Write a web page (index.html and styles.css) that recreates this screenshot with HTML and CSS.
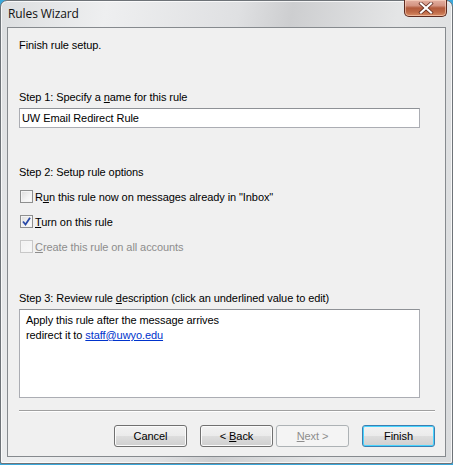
FILE: index.html
```html
<!DOCTYPE html>
<html>
<head>
<meta charset="utf-8">
<link rel="stylesheet" href="styles.css">
</head>
<body>
<div class="window">
  <div class="titlebar">
    <span class="title">Rules Wizard</span>
    <span class="close"><svg width="16" height="12" viewBox="0 0 16 12"><path d="M3 1.5 L13 10.5 M13 1.5 L3 10.5" stroke="#5a2418" stroke-width="3.6" stroke-linecap="square"/><path d="M3 1.5 L13 10.5 M13 1.5 L3 10.5" stroke="#ffffff" stroke-width="2.2" stroke-linecap="square"/></svg></span>
  </div>
  <div class="client">
    <div class="text heading">Finish rule setup.</div>
    <div class="text step1">Step 1: Specify a <u>n</u>ame for this rule</div>
    <div class="field">UW Email Redirect Rule</div>
    <div class="text step2">Step 2: Setup rule options</div>
    <div class="options">
      <div class="opt"><span class="cb"></span><span>R<u>u</u>n this rule now on messages already in "Inbox"</span></div>
      <div class="opt"><span class="cb checked"><svg width="9" height="9" viewBox="0 0 9 9"><path d="M1 4.5 L3.5 7.5 L8 0.8" fill="none" stroke="#2a4aa8" stroke-width="1.8"/></svg></span><span><u>T</u>urn on this rule</span></div>
      <div class="opt disabled"><span class="cb"></span><span><u>C</u>reate this rule on all accounts</span></div>
    </div>
    <div class="text step3">Step 3: Review rule <u>d</u>escription (click an underlined value to edit)</div>
    <div class="desc">
      <div>Apply this rule after the message arrives</div>
      <div>redirect it to <a class="link">staff@uwyo.edu</a></div>
    </div>
    <div class="sep"></div>
    <div class="buttons">
      <span class="btn"><span>Cancel</span></span>
      <span class="btn back"><span>&lt; <u>B</u>ack</span></span>
      <span class="btn next dis"><span><u>N</u>ext &gt;</span></span>
      <span class="btn finish"><span>Finish</span></span>
    </div>
  </div>
</div>
</body>
</html>
```
FILE: styles.css
```css
html, body {
  margin: 0;
  padding: 0;
}
body {
  background: #3aa8dc;
  width: 453px;
  height: 465px;
  overflow: hidden;
  font-family: "Liberation Sans", Arial, sans-serif;
  font-size: 11px;
  letter-spacing: -0.08px;
  color: #000;
}
.window {
  box-sizing: border-box;
  width: 453px;
  height: 464px;
  border: 1px solid #6e7378;
  border-radius: 7px 7px 2px 2px;
  background: linear-gradient(100deg, #dcdee0 0%, #eeeff0 20%, #dfe0e2 45%, #cdced0 55%, #e4e5e6 75%, #d9dbdd 100%);
  padding: 0 6px 6px 6px;
  display: flex;
  flex-direction: column;
  box-shadow: inset 0 0 0 1px rgba(255,255,255,0.75);
}
.titlebar {
  height: 26px;
  display: flex;
  align-items: flex-start;
  justify-content: space-between;
}
.title {
  font-family: "Open Sans", "Liberation Sans", sans-serif;
  font-size: 12px;
  letter-spacing: -0.1px;
  margin-left: 1px;
  margin-top: 5px;
  line-height: 16px;
  color: #111;
}
.close {
  width: 43px;
  height: 17px;
  margin-top: -1px;
  margin-right: -1px;
  box-sizing: border-box;
  border: 1px solid #5d2a20;
  border-top: none;
  border-radius: 0 0 5px 5px;
  background: linear-gradient(#e3b0a2 0%, #d49482 35%, #b25a3c 50%, #bf6a48 75%, #d88c66 100%);
  box-shadow: inset 0 0 0 1px rgba(255,220,200,0.55);
  display: flex;
  align-items: center;
  justify-content: center;
}
.client {
  flex: 1;
  border: 1px solid #868a8e;
  background: #f0f0f0;
  padding: 10px 10px 0 11px;
  display: flex;
  flex-direction: column;
}
.text {
  line-height: 15px;
  height: 15px;
  white-space: nowrap;
}
.step1 { margin-top: 37px; }
.field {
  margin-top: 3px;
  box-sizing: border-box;
  width: 401px;
  height: 20px;
  border: 1px solid #abadb3;
  border-top-color: #8e9196;
  background: #fff;
  padding: 2px 0 0 2px;
  line-height: 15px;
}
.step2 { margin-top: 37px; }
.options {
  margin-top: 4px;
  display: flex;
  flex-direction: column;
}
.opt {
  height: 25px;
  display: flex;
  align-items: center;
  gap: 2px;
  white-space: nowrap;
}
.cb {
  box-sizing: border-box;
  width: 13px;
  height: 13px;
  margin-left: 1px;
  border: 1px solid #8e8f8f;
  background: linear-gradient(135deg, #dcdcdc 0%, #f4f4f4 60%, #fdfdfd 100%);
  box-shadow: inset 0 0 0 1px #f4f4f4;
  display: flex;
  align-items: center;
  justify-content: center;
}
.disabled { color: #8d8d8d; }
.disabled .cb {
  border-color: #c8c8c8;
  background: linear-gradient(135deg, #f0f0f0, #f8f8f8);
}
.step3 { margin-top: 32px; }
.desc {
  margin-top: 3px;
  box-sizing: border-box;
  width: 401px;
  height: 89px;
  border: 1px solid #abadb3;
  border-top-color: #8e9196;
  background: #fff;
  padding: 3px 0 0 6px;
  line-height: 15px;
}
.link {
  color: #0033cc;
  text-decoration: underline;
}
.sep {
  margin-top: 12px;
  width: 416px;
  height: 0;
  border-top: 1px solid #a0a0a0;
  border-bottom: 1px solid #ffffff;
}
.buttons {
  margin-top: 13px;
  width: 416px;
  display: flex;
  justify-content: flex-end;
  gap: 13px;
}
.btn {
  box-sizing: border-box;
  width: 73px;
  height: 22px;
  border: 1px solid #707070;
  border-radius: 3px;
  background: linear-gradient(#f2f2f2 0%, #ebebeb 48%, #dddddd 52%, #cfcfcf 100%);
  box-shadow: inset 0 0 0 1px #fbfbfb;
  display: flex;
  align-items: center;
  justify-content: center;
  line-height: 15px;
  white-space: pre;
}
.back { margin-right: -10px; }
.dis {
  color: #8d8d8d;
  border-color: #adb2b5;
  background: #f4f4f4;
  box-shadow: none;
}
.finish {
  border-color: #3c7fb1;
  box-shadow: inset 0 0 0 1px #48d4ff;
}
```
